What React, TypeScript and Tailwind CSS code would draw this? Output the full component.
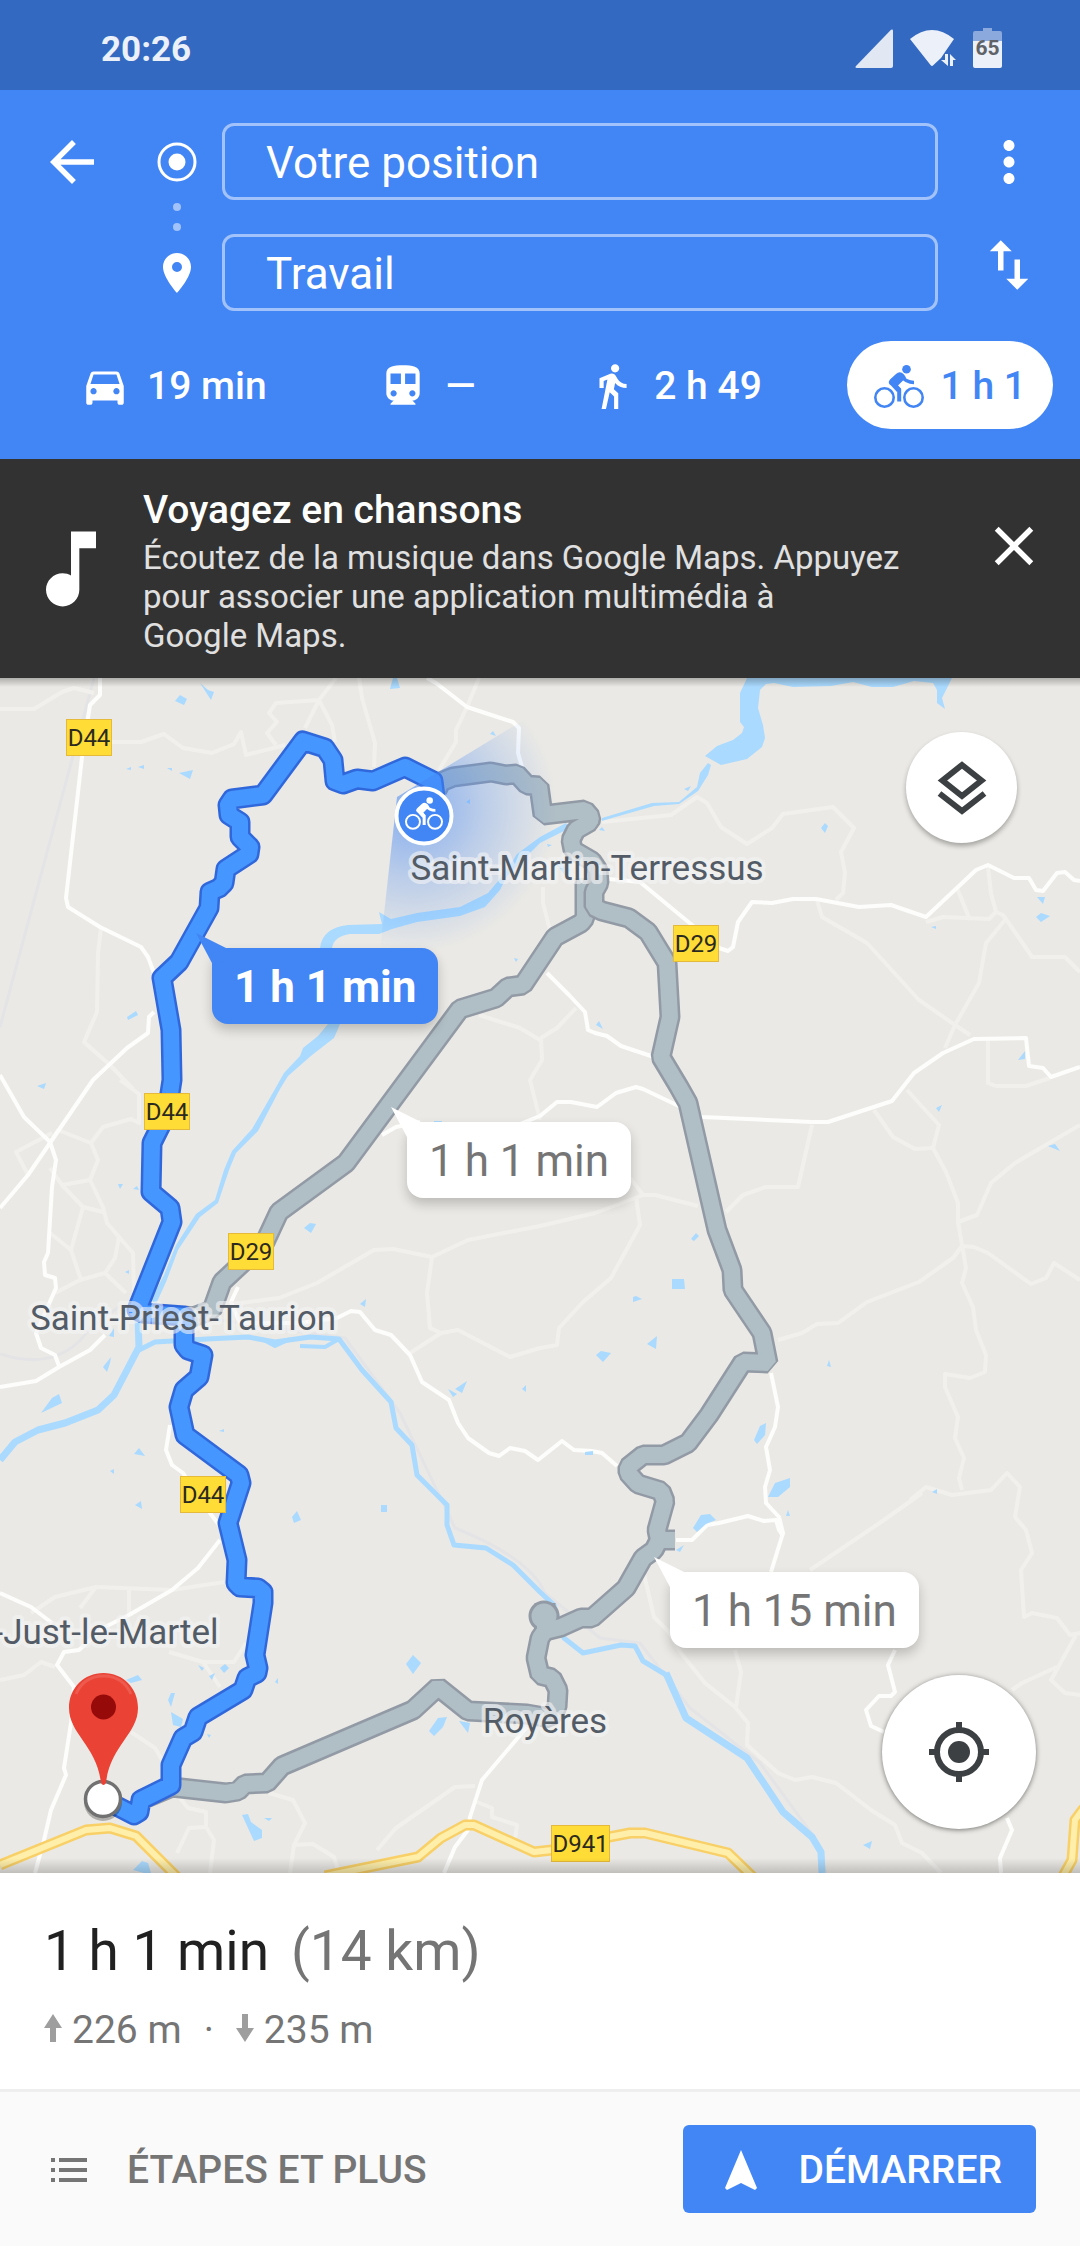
import {
  MdArrowBack,
  MdClose,
  MdDirectionsCar,
  MdDirectionsTransit,
  MdDirectionsWalk,
  MdMoreVert,
  MdMusicNote,
  MdPlace,
  MdSwapVert,
} from 'react-icons/md';

const mainRoads = [
  'M100 0V17L90 27L82 79L66 220L68 229L100 249L141 269L148 279L154 295',
  'M154 334L149 339L148 355L127 370L93 402L52 462L28 497L0 530',
  'M0 397L24 439L50 464L56 482L52 509L48 575L44 584L45 597L55 600L56 610L36 655L41 670L55 677L59 688',
  'M0 709L36 703L59 689L90 672L105 657',
  'M427 0L436 5L467 29L513 44L519 50L518 75L522 89',
  'M609 201L640 204L692 247L719 270L728 273L733 269L738 244L752 224L772 225L793 221H816L859 229L891 227L926 239L976 192L988 187L1014 200H1029L1036 212L1043 213L1057 195L1065 194L1074 202L1080 203',
  'M547 295L569 317L585 334L588 352L595 355L607 358L621 368L654 379',
  'M1080 389L1051 399L1043 390L1029 388L1026 360L974 361L943 375L914 395L892 423L828 444H812L702 439L643 411L636 409L616 415L597 429L571 424H557L540 438L520 446',
  'M382 457L396 449L420 444',
  'M238 609L231 624L240 645H300L337 640L351 633L360 634L375 652L391 657L410 677L422 704L449 722L458 745L468 760L489 775L499 778L510 770L525 773L538 782L562 763L574 772L592 773L602 775L617 788',
  'M170 747L166 772L172 787L183 795L210 835L219 847',
  'M220 862L198 890L172 912L129 937L103 950L79 972L64 974L57 987L74 1009L71 1045L64 1090L66 1097L51 1132L44 1162L35 1195',
  'M0 915L31 929L52 945',
  'M527 1049L482 1102L470 1139L468 1152L455 1169L444 1195',
  'M771 695L778 729L775 749L766 769L770 792L765 809L766 825L779 839L783 855L771 894',
  'M676 862H692L707 847L719 845L748 838L764 843L776 842L779 852L783 858',
  'M895 972L888 987L895 1014L891 1018H879L866 1032L871 1048L884 1054',
  'M1007 1140L1012 1152L1000 1180L1001 1195',
];

const minorRoads = [
  'M0 31H34L62 14L74 10L94 15',
  'M112 64H141L164 56L183 70L212 75L234 66L241 54L246 77L285 67',
  'M336 0L319 22L305 50M319 22L276 25L269 35L277 44L267 55L276 67M319 22L332 47L335 64',
  'M359 0L362 20L375 65L374 89M479 0L467 29L456 52V64L439 92',
  'M101 250L98 275L97 334L84 364L110 387L133 411M479 337L520 350L540 362',
  'M602 144L671 137L697 119L707 125L721 149L747 166L772 150L783 136L833 129L854 150L841 174L845 195L843 215L836 222',
  'M817 222L822 239L867 265L919 322L955 347L970 357',
  'M1005 242L986 265L979 305L955 347L945 370',
  'M926 244L943 239L989 241L996 234L1003 237L1017 257L1032 279H1065L1080 294',
  'M957 210L970 242M988 189L991 215L996 234M988 362V405L996 408H1026L1050 400',
  'M543 209V225L550 252M576 330L557 350L541 360L542 382L530 402L540 442',
  'M50 464L58 452L91 465L98 482L90 502L62 507L50 490M91 465L103 449L131 441L139 445V416L120 402M52 455L16 474L28 497',
  'M90 502L103 529L107 545L119 559L115 580L105 595L80 602L55 615M119 559L133 575L134 615M105 595L126 615M62 507L83 529L103 534M83 529L71 572L81 602M50 555L71 572',
  'M241 625L279 620L317 605L374 572L393 571L432 579L468 562L540 548L595 535L643 517H655L698 528M630 500L643 517',
  'M432 579L427 615L430 650L441 655L410 675M441 655L458 652L510 679L540 670L557 667L559 650L583 624L611 600L640 547L636 519',
  'M726 534L743 517L766 509H798L812 447M874 432L893 459L915 471L933 470',
  'M907 412L939 447L933 470L946 494L958 525V544L966 590L962 605L973 629L976 652L986 677L985 694L970 700L945 696V709L958 739L955 760L964 780L959 800L962 812',
  'M958 544L977 537L991 505L1015 485L1080 447',
  'M778 662L802 655L817 646L838 645L867 624L919 604L953 580L962 568L974 569L988 575L1031 606L1046 600L1054 585L1080 602',
  'M922 815L884 842L810 892M910 822L926 809L952 817L991 812L1007 795L1020 809L1015 839L1026 852L1032 875L1021 892L1024 939L1032 935L1057 940L1070 957L1080 955',
  'M1076 957L1051 1002L1065 1015L1080 1017M1057 989L1022 1005L1012 1012',
  'M643 892L654 939L669 954L681 975L705 1005L735 1029L748 1045L747 1067L778 1095L795 1102L812 1099L836 1105L871 1132L895 1147L902 1165L922 1175L941 1195',
  'M735 972L741 994L736 1029M31 935L55 919L96 909L80 930M96 909L172 912L224 904M129 910V937',
  'M131 1054L155 1070L162 1082M0 1002L24 997L41 984L55 989M169 974L203 984L220 1009M203 984H234L246 965',
  'M179 1119L188 1130L206 1134V1149L214 1162L210 1195M206 1149L189 1150L177 1175',
  'M269 1115L293 1122L305 1145L294 1167L290 1195M294 1167L313 1166L334 1179L339 1195',
  'M475 1108L455 1109L396 1150L377 1172M477 1124L492 1130V1139L517 1147L515 1162',
];

const water = [
  'M747 0L740 15V44L744 49L742 55L733 62L717 68L705 78L721 87L747 81L762 69L765 60L763 47L758 30L760 12L766 6L774 5L793 9L831 8L853 4L872 9H893L914 3L933 5L937 12V25L945 31L942 20L952 0Z',
  'M708 85L700 95L697 109L679 124L652 125L602 140V143L612 140L654 128L679 126L698 113L708 97L711 87Z',
  'M566 145L540 159L517 176L505 195L488 215L460 229L417 235L391 241L379 234L382 246L348 247Q322 250 320 270H332Q334 258 350 256H379L392 251L417 244L460 238L485 229L500 212L507 198L524 181L540 165L570 150Z',
  'M328 346L318 358L303 370L300 378L284 395L275 411L252 451L232 473L224 492L215 522L196 536L176 567L164 597L151 622L156 626L166 604L178 572L200 539L218 525L229 492L236 475L258 453L280 411L288 398L312 377L334 360L340 346Z',
];

const ponds = [
  'M200 5l8 7 6 2-3 8zM175 23l5-6 7 4-3 6zM179 95l14-3-3 9zM126 91l5-2v3zM138 89l6-2v4zM167 90h5v3z',
  'M127 339l9-6 2 4-10 5zM390 11l3-11h4l3 10zM37 408l9-3-2 6zM490 56l3-3 3 5zM466 124l4-3v5zM514 280l4 1-2 3z',
  'M821 150l4-5 3 3-3 7zM684 111l7-3-3 5zM1037 219h8l-2 7zM1036 239l5-4 9 3-9 6zM931 249l5-1v3z',
  'M596 347l3-4 4 8zM1018 382l7-9v8zM556 185l6-5 8 12-3 8zM599 152l3-3 3 4zM547 166l5 1-4 2z',
  'M304 550l6-5 6 1-5 9zM360 626l6-5-1 8zM118 506h5l-3 5zM133 511l4-3 2 4zM125 594l4-2v4z',
  'M103 689l8-10-1 6-3 9zM41 735l11-15 7-4 3 9zM134 776l5-6 6 8zM110 793l4-2v5zM219 753l5-2v3z',
  'M455 711l12-8-5 12zM448 711l9 5-4 3zM522 711l4-4v7zM109 658l5-8v9zM434 443h8v2h-8z',
  'M691 561l5-6 3 3-5 5zM672 601h12l1 10h-13zM633 619l3-1 6 3-9 3zM647 666l10-8-1 13zM596 677l5-4 10 2-8 9z',
  'M827 688l2-6 2 7zM754 762l6-14 6-3-1 12-8 9zM768 819l7-14 15-5v9l-12 10zM1048 468l7-2 5 7zM936 430l6-3-3 7z',
  'M932 814l5-3v5zM585 774l8-1v4h-8zM135 827l6-4 1 8zM292 839l5-6 4 9-7 3zM381 827h6v7h-6zM406 986l7-9 8 8-8 11z',
  'M126 1002l12-5 4 5-11 3zM220 990l5-4 4 4-5 5zM198 987l6 3-2 3zM209 998l6-3-3 7zM168 1022l3-7h4l-4 14z',
  'M171 1034l12 7-2 8-8-2zM207 1056l4 1-2 3zM275 1004l3-4v6zM429 1053l9-13 9-1-4 10-9 9zM459 1043l11 2-2 10z',
  'M242 1137l6-1 3 8 11 8v8l-8 3zM264 1140h8l-3 3zM133 1192l9-9 6 2 3 10h-7zM693 850l8-13 9-1 6 6-10 4-9 8z',
  'M676 872l8-5-4 7zM786 838l2-6 2 6zM863 1167l9-4-2 8z',
];

const highways = [
  'M0 1187L86 1152L110 1150L136 1158L180 1202',
  'M325 1198L418 1179L441 1160L465 1147H474L534 1174L552 1172L609 1159L630 1155H645L728 1175L756 1202',
  'M1084 1130L1075 1142L1072 1182L1062 1200',
];

const westRoute =
  'M435 119L433 103L405 89L373 103L357 101L343 106L335 103L333 82L325 70L303 63L263 117L232 121L228 127L229 137L240 144V159L250 169L249 176L226 191L224 205L219 210L210 214L209 230L179 284L162 300L171 352L172 402L167 435L152 465L151 514L170 530L172 544L137 632L143 635L184 638V667L188 672L203 677L199 699L184 712L179 729L185 757L239 797L241 805L228 845L237 882L236 905L240 909L258 910L263 914V925L255 977L258 990L257 995L247 1000L243 1012L198 1039L193 1054L183 1060L171 1087V1107L141 1122L139 1134L134 1137L103 1121';

const middleRoute =
  'M585 200V240L581 245L555 259L523 307L508 309L496 320L460 331L346 485L279 534L265 564L222 604L212 632L193 639L184 638';

const eastRoute =
  'M437 112L441 104L453 99L491 94L506 97L517 96L527 107L539 108L543 137L585 132L591 139L590 144L576 152L571 162L573 172L592 183L598 192L599 205L594 214V229L602 233L629 240L648 254L667 285L670 339L661 379L679 409L688 425L717 552L732 592L733 612L762 655L768 685L743 684L709 737L688 765L664 777H643L628 789V795L638 806L661 813L665 823L657 852L659 862L654 872L643 880L626 910L592 940H581L561 949L545 953L540 960L536 980L540 997L552 1000L558 1012L557 1029L550 1040L527 1036L468 1033L438 1009L413 1032L282 1088L267 1105L245 1106L238 1113L226 1115L172 1109L141 1122';

const shields = [
  { name: 'D44', x: 66, y: 41, width: 46 },
  { name: 'D44', x: 144, y: 415, width: 46 },
  { name: 'D29', x: 673, y: 247, width: 46 },
  { name: 'D29', x: 228, y: 555, width: 46 },
  { name: 'D44', x: 180, y: 798, width: 46 },
  { name: 'D941', x: 551, y: 1147, width: 59 },
];

const towns = [
  { name: 'Saint-Martin-Terressus', x: 587, y: 202 },
  { name: 'Saint-Priest-Taurion', x: 183, y: 652 },
  { name: '-Just-le-Martel', x: 106, y: 966 },
  { name: 'Royères', x: 545, y: 1055 },
];

const BikeIcon = ({ className = '' }) => (
  <svg viewBox="0 0 50 43" className={className} aria-hidden="true">
    <g fill="none" stroke="currentColor">
      <circle cx="10.5" cy="32.500" r="9.2" strokeWidth="2.6" />
      <circle cx="39.5" cy="32.500" r="9.2" strokeWidth="2.6" />
      <path d="M27 10L18 17.5L25.2 24.500V36.500" strokeWidth="4" />
      <path d="M27.500 11Q32 17.5 40 17.5" strokeWidth="3.6" />
    </g>
    <path
      d="M22 9Q26 5.500 30 9.500L32 12.500L26 18.500L24 20.500L27 24L23 27L17 20.500Q13 18 16 14.500Z"
      fill="currentColor"
    />
    <circle cx="32.500" cy="4.300" r="4.300" fill="currentColor" />
  </svg>
);

const StatusBar = () => (
  <div className="flex h-[90px] items-center justify-between bg-[#3469c1] pr-[78px] pl-[101px] text-[#ebf0f9]">
    <span className="pt-2.5 text-[35px] font-bold">20:26</span>
    <div className="flex items-center gap-[17px] pt-1.5">
      <svg width="38" height="39" viewBox="0 0 38 39" aria-hidden="true">
        <path
          d="M36 .8Q38 0 38 2V37Q38 39 36 39H2Q-.5 39 1 37Z"
          fill="#e1e8f4"
        />
      </svg>
      <svg width="46" height="36" viewBox="0 0 46 36" fill="currentColor" aria-hidden="true">
        <path d="M0 9Q22 -9 44 9L34 23.500L31 28L23.500 35Q22 37 20.500 35Z" />
        <path d="M30 36V31L36 24H46V36Z" fill="#3469c1" />
        <path d="M35 24H38V36L31 30H35ZM40 24L46 30H43V36H40Z" />
      </svg>
      <div className="relative flex h-10 w-[29px] items-center justify-center">
        <svg viewBox="0 0 29 40" className="absolute inset-0" aria-hidden="true">
          <path d="M10 0H19V3H27Q29 3 29 5V14H0V5Q0 3 2 3H10Z" fill="#8ba9dc" />
          <path d="M0 13H29V38Q29 40 27 40H2Q0 40 0 38Z" fill="currentColor" />
        </svg>
        <span className="relative text-[21px] leading-10 font-bold text-[#5f6368]">65</span>
      </div>
    </div>
  </div>
);

const modeClass =
  'flex h-[88px] items-center gap-[17px] rounded-full px-[27px] pt-0.5 text-[39px] font-medium whitespace-nowrap';

const fieldClass =
  'h-[77px] w-full rounded-xl border-3 border-[#a1c2fa] bg-transparent px-[41px] pt-0.5 text-[44px] text-white outline-none';

const SearchHeader = () => (
  <header className="bg-[#4285f4] pt-[33px] pb-[30px] text-white">
    <div className="flex">
      <div className="w-36">
        <button aria-label="Retour" className="flex h-[77px] w-full items-center justify-center">
          <MdArrowBack size={66} />
        </button>
      </div>
      <div className="flex w-[78px] flex-col items-center pr-3">
        <div className="flex h-[77px] items-center">
          <svg width="40" height="40" viewBox="0 0 40 40" aria-hidden="true">
            <circle cx="20" cy="20" r="18" fill="none" stroke="white" strokeWidth="3" />
            <circle cx="20" cy="20" r="8.500" fill="white" />
          </svg>
        </div>
        <div className="flex h-[34px] flex-col items-center justify-center gap-3">
          <span className="size-2 rounded-full bg-[#a1c2fa]" />
          <span className="size-2 rounded-full bg-[#a1c2fa]" />
        </div>
        <div className="flex h-[77px] items-center">
          <MdPlace size={48} />
        </div>
      </div>
      <div className="flex flex-1 flex-col gap-[34px]">
        <input aria-label="Départ" defaultValue="Votre position" className={fieldClass} />
        <input aria-label="Destination" defaultValue="Travail" className={fieldClass} />
      </div>
      <div className="flex w-[142px] flex-col items-center gap-8">
        <button aria-label="Plus d'options" className="flex h-[77px] items-center">
          <MdMoreVert size={66} />
        </button>
        <button aria-label="Inverser le trajet">
          <MdSwapVert size={66} />
        </button>
      </div>
    </div>
    <nav className="mt-[30px] flex justify-between pr-[27px] pl-[53px]">
      <button className={modeClass}>
        <MdDirectionsCar size={50} />
        19 min
      </button>
      <button className={modeClass}>
        <MdDirectionsTransit size={50} />
        —
      </button>
      <button className={modeClass}>
        <MdDirectionsWalk size={50} />
        2 h 49
      </button>
      <button className={`${modeClass} bg-white text-[#4285f4]`}>
        <BikeIcon className="h-[43px] w-[50px]" />
        1 h 1
      </button>
    </nav>
  </header>
);

const MusicBanner = () => (
  <section className="flex h-[219px] bg-[#323232] pt-7 text-white">
    <div className="w-[143px] pt-8 pl-[21px]">
      <MdMusicNote size={100} />
    </div>
    <div className="flex-1">
      <h2 className="text-[39px] leading-[46px] font-medium">Voyagez en chansons</h2>
      <p className="mt-[5px] text-[33px] leading-[39px] text-[#e0e0e0]">
        Écoutez de la musique dans Google Maps. Appuyez pour associer une application multimédia à
        Google&nbsp;Maps.
      </p>
    </div>
    <div className="w-[164px] pt-[26px] pl-[65px]">
      <button aria-label="Fermer">
        <MdClose size={66} />
      </button>
    </div>
  </section>
);

const MapDrawing = () => (
  <svg viewBox="0 0 1080 1195" className="block w-full bg-[#eae9e5] font-['Roboto',sans-serif]">
    <defs>
      <radialGradient id="beam" gradientUnits="userSpaceOnUse" cx="412" cy="130" r="145">
        <stop offset="0" stopColor="#4285f4" stopOpacity="0.6" />
        <stop offset="0.5" stopColor="#4285f4" stopOpacity="0.27" />
        <stop offset="1" stopColor="#4285f4" stopOpacity="0" />
      </radialGradient>
      <linearGradient id="topShade" x2="0" y2="1">
        <stop offset="0" stopOpacity="0.25" />
        <stop offset="1" stopOpacity="0" />
      </linearGradient>
      <linearGradient id="bottomShade" x2="0" y2="1">
        <stop offset="0" stopOpacity="0" />
        <stop offset="1" stopOpacity="0.18" />
      </linearGradient>
    </defs>

    <g fill="none" strokeLinejoin="round">
      <path
        d="M94 0L0 349M0 676Q60 695 90 650L120 628L345 660L400 735L455 850Q530 880 545 915L600 960L640 965L690 1030L760 1085L815 1160L826 1195"
        stroke="#e4e4e6"
        strokeWidth="3"
      />
      <g stroke="#f1f0ed" strokeWidth="4">
        {minorRoads.map((d) => (
          <path key={d} d={d} />
        ))}
      </g>
      <g stroke="#aadaff">
        <path d="M138 640L139 669L114 717L98 732L65 745L38 752L15 764L0 782" strokeWidth="7" />
        <path
          d="M139 672L155 664L207 661L248 659L275 664L310 659L339 661L362 692L391 724L396 750L412 767L417 797L447 827V847L454 867L486 870L513 887L540 914L554 927L564 960L583 975L621 967L635 968L643 983L668 998"
          strokeWidth="5"
        />
        <path d="M666 995L686 1040L747 1080L783 1134L812 1159L821 1174L822 1195" strokeWidth="7" />
        <path d="M262 661L275 668L290 661M300 668L325 669L339 661" strokeWidth="4" />
      </g>
      <g stroke="#fdfdfc" strokeWidth="4">
        {mainRoads.map((d) => (
          <path key={d} d={d} />
        ))}
      </g>
    </g>

    <g fill="#aadaff">
      {[...water, ...ponds].map((d) => (
        <path key={d} d={d} />
      ))}
    </g>

    <g fill="none" strokeLinejoin="round">
      {highways.map((d) => (
        <g key={d}>
          <path d={d} stroke="#f8d067" strokeWidth="11" />
          <path d={d} stroke="#ffefaa" strokeWidth="6" />
        </g>
      ))}
    </g>

    <g fill="none" strokeLinejoin="bevel">
      <path d={middleRoute} stroke="#929aa5" strokeWidth="21" />
      <path d={middleRoute} stroke="#b0bec5" strokeWidth="16" />
      <path d={eastRoute} stroke="#929aa5" strokeWidth="21" />
      <path d="M657 862H675M545 925V955" stroke="#929aa5" strokeWidth="21" />
      <circle cx="544" cy="938" r="14" fill="#b0bec5" stroke="#929aa5" strokeWidth="3" />
      <path d={eastRoute} stroke="#b0bec5" strokeWidth="16" />
      <path d="M657 862H675M545 930V955" stroke="#b0bec5" strokeWidth="16" />
      <path d={westRoute} stroke="#3068dc" strokeWidth="21" strokeLinejoin="round" />
      <path d={westRoute} stroke="#4596ff" strokeWidth="16" strokeLinejoin="round" />
    </g>

    <path d="M397 119L540 32L620 140L520 290H378Z" fill="url(#beam)" />

    {shields.map(({ name, x, y, width }) => (
      <g key={`${x}-${y}`}>
        <rect
          x={x + 0.5}
          y={y + 0.5}
          width={width - 1}
          height="36"
          fill="#ffdc36"
          stroke="#e5b93a"
        />
        <text x={x + width / 2} y={y + 27} textAnchor="middle" fontSize="24" fill="#2b2a20">
          {name}
        </text>
      </g>
    ))}

    <g
      textAnchor="middle"
      fontSize="35"
      fill="#535c66"
      stroke="#f4f4f5"
      strokeOpacity="0.6"
      strokeWidth="8"
      strokeLinejoin="round"
      paintOrder="stroke"
    >
      {towns.map(({ name, x, y }) => (
        <text key={name} x={x} y={y}>
          {name}
        </text>
      ))}
    </g>

    <circle cx="424" cy="138" r="27.500" fill="#4285f4" stroke="white" strokeWidth="4" />
    <svg x="405" y="119" width="38" height="33" className="text-white">
      <BikeIcon />
    </svg>

    <circle cx="103" cy="1124" r="19" fill="#000" opacity="0.25" />
    <circle cx="103" cy="1121" r="17.500" fill="white" stroke="#717171" strokeWidth="3.500" />
    <path
      d="M103.500 995C84 995 69 1010 69 1030C69 1056 97 1068 101 1105Q103.500 1109 106 1105C110 1068 138 1056 138 1030C138 1010 123 995 103.500 995Z"
      fill="#ea4335"
    />
    <path d="M76 1016Q84 998 103.500 998Q123 998 131 1016" fill="none" stroke="#ee5a4e" strokeWidth="3" />
    <circle cx="103.500" cy="1029" r="12.500" fill="#960a0a" />

    <rect width="1080" height="9" fill="url(#topShade)" />
    <rect y="1180" width="1080" height="15" fill="url(#bottomShade)" />
  </svg>
);

const Tail = () => (
  <svg
    width="42"
    height="42"
    viewBox="0 0 42 42"
    fill="currentColor"
    className="absolute -top-[15px] -left-4"
    aria-hidden="true"
  >
    <path d="M0 0L32 16L28 28L17 32Z" />
  </svg>
);

const calloutClass =
  'absolute flex h-[76px] items-center rounded-2xl px-[22px] pt-0.5 text-[44px] whitespace-nowrap shadow-[0_6px_12px_rgba(0,0,0,0.2)]';

const RouteMap = () => (
  <main className="relative overflow-hidden">
    <MapDrawing />
    <button className={`${calloutClass} top-[270px] left-[212px] bg-[#4285f4] font-bold text-[#4285f4]`}>
      <Tail />
      <span className="text-white">1 h 1 min</span>
    </button>
    <button className={`${calloutClass} top-[444px] left-[407px] bg-white text-white`}>
      <Tail />
      <span className="text-[#757575]">1 h 1 min</span>
    </button>
    <button className={`${calloutClass} top-[894px] left-[670px] bg-white text-white`}>
      <Tail />
      <span className="text-[#757575]">1 h 15 min</span>
    </button>
    <button
      aria-label="Calques"
      className="absolute top-[54px] right-[63px] flex size-[111px] items-center justify-center rounded-full bg-white shadow-[0_3px_5px_rgba(0,0,0,0.3)]"
    >
      <svg width="50" height="54" viewBox="0 0 50 54" fill="none" stroke="#3c4043" strokeWidth="6" aria-hidden="true">
        <path d="M25 4L44.500 19.500L25 35L5.500 19.500Z" />
        <path d="M2.500 32.500L25 50L47.500 32.500" />
      </svg>
    </button>
    <button
      aria-label="Ma position"
      className="absolute right-11 bottom-11 flex size-[154px] items-center justify-center rounded-full bg-white shadow-[0_1px_5px_rgba(0,0,0,0.5)]"
    >
      <svg width="60" height="60" viewBox="0 0 60 60" aria-hidden="true">
        <circle cx="30" cy="30" r="22" fill="none" stroke="#3c4043" strokeWidth="6" />
        <circle cx="30" cy="30" r="11" fill="#3c4043" />
        <path d="M30 0V8M30 52V60M0 30H8M52 30H60" stroke="#3c4043" strokeWidth="6" />
      </svg>
    </button>
  </main>
);

const SlopeArrow = ({ className = '' }) => (
  <svg width="18" height="28" viewBox="0 0 18 28" fill="#9e9e9e" className={className} aria-hidden="true">
    <path d="M9 0L18 14H12V28H6V14H0Z" />
  </svg>
);

const TripSheet = () => (
  <footer className="bg-white">
    <div className="h-[219px] border-b-3 border-[#eeeeee] px-11 pt-[45px] text-[#757575]">
      <h1 className="text-[55px] leading-[66px]">
        <span className="text-[#212121]">1 h 1 min</span>
        <span className="ml-[22px]">(14 km)</span>
      </h1>
      <p className="mt-5 flex items-center text-[39px] leading-[52px]">
        <SlopeArrow className="mr-2.5 mb-1" />
        226 m<span className="mx-[22px]">·</span>
        <SlopeArrow className="mr-2.5 mb-1 rotate-180" />
        235 m
      </p>
    </div>
    <div className="flex h-[154px] items-center justify-between bg-[#fafafa] pr-11 pl-[51px] text-[39px] font-medium">
      <button className="flex items-center gap-10 pt-0.5 text-[#757575]">
        <svg width="36" height="25" viewBox="0 0 36 25" fill="currentColor" aria-hidden="true">
          <path d="M0 0H4V4H0ZM8 0H36V4H8ZM0 10H4V14H0ZM8 10H36V14H8ZM0 20H4V24H0ZM8 20H36V24H8Z" />
        </svg>
        ÉTAPES ET PLUS
      </button>
      <button className="flex h-[88px] items-center gap-[42px] rounded-md bg-[#4285f4] pt-0.5 pr-[34px] pl-[42px] text-white">
        <svg width="32" height="40" viewBox="0 0 32 40" fill="currentColor" aria-hidden="true">
          <path d="M16 0L32 38L30 40L16 33L2 40L0 38Z" />
        </svg>
        DÉMARRER
      </button>
    </div>
  </footer>
);

const App = () => {
  return (
    <div className="w-full font-['Roboto',sans-serif]">
      <StatusBar />
      <SearchHeader />
      <MusicBanner />
      <RouteMap />
      <TripSheet />
    </div>
  );
};

export default App;
